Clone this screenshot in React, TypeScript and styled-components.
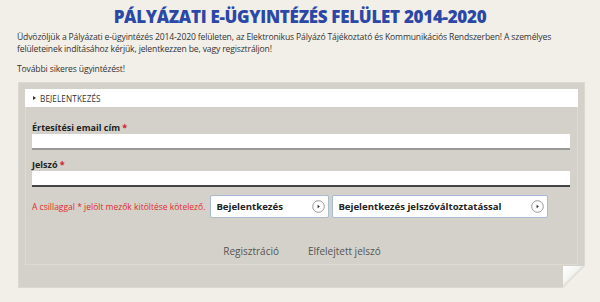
import React from "react";
import styled, { createGlobalStyle } from "styled-components";

const Global = createGlobalStyle`
  html, body { margin: 0; padding: 0; background: #f2efe9; }
  body { font-family: "Open Sans", "Noto Sans", sans-serif; color: #333; }
  * { box-sizing: border-box; }
`;

const Page = styled.div`
  width: 600px;
  height: 302px;
  overflow: hidden;
  padding: 4px 0 0 0;
`;

const Title = styled.h1`
  margin: 0;
  height: 26px;
  text-align: center;
  font-family: "Open Sans", sans-serif;
  font-weight: 800;
  font-size: 17px;
  line-height: 26px;
  color: #2b48a6;
  letter-spacing: -0.3px;
`;

const Intro = styled.p<{ $gap: number }>`
  margin: ${(p) => p.$gap}px 10px 0 17px;
  font-size: 8.6px;
  line-height: 12px;
  letter-spacing: -0.15px;
  color: #333;
`;

const Panel = styled.div`
  position: relative;
  margin: 7px 15px 0 18px;
  background: #d4d1ca;
  border: 1px solid #dcd9d3;
  padding: 6px 6px 22px 6px;
`;

const Header = styled.div`
  height: 18px;
  background: #fff;
  display: flex;
  align-items: center;
  gap: 4px;
  padding-left: 8px;
  font-size: 8.2px;
  color: #333;
  letter-spacing: 0.1px;
`;

const Arrow = styled.span`
  width: 0;
  height: 0;
  border-top: 2.5px solid transparent;
  border-bottom: 2.5px solid transparent;
  border-left: 3px solid #333;
`;

const FormBox = styled.div`
  border: 1px solid #dedbd5;
  border-top: none;
  padding: 15px 7px 6px 6px;
`;

const Label = styled.div`
  font-size: 9px;
  font-weight: 700;
  color: #222;
  line-height: 12px;
  height: 12px;
`;

const Star = styled.span`
  color: #d0202a;
`;

const Input = styled.div<{ $dark?: boolean }>`
  height: 16px;
  background: #fff;
  border-bottom: 2px solid ${(p) => (p.$dark ? "#444" : "#9a9a98")};
  margin: 0 0 9px 0;
`;

const Actions = styled.div`
  display: flex;
  align-items: center;
  margin-top: -1px;
  height: 23px;
`;

const Required = styled.span`
  font-size: 8.5px;
  color: #e02b2b;
  margin-right: 5px;
`;

const Button = styled.button<{ $w: number }>`
  width: ${(p) => p.$w}px;
  height: 23px;
  background: #fff;
  border: 1px solid #a8bbd2;
  border-radius: 2px;
  display: flex;
  align-items: center;
  justify-content: space-between;
  padding: 0 3px 0 5px;
  margin-right: 3px;
  font-family: "Open Sans", sans-serif;
  font-weight: 700;
  font-size: 9.6px;
  color: #222;
  cursor: pointer;
`;

const Links = styled.div`
  display: flex;
  justify-content: center;
  gap: 29px;
  margin-top: 26px;
  padding-left: 2px;
  line-height: 14px;
  font-size: 10px;
  color: #555;
`;

const Fold = styled.div`
  position: absolute;
  right: -1px;
  bottom: -1px;
  width: 22px;
  height: 22px;
  background: linear-gradient(
    to bottom right,
    #ffffff 0%,
    #f4f4f2 40%,
    #dcdbd6 49%,
    #f2efe9 51%,
    #f2efe9 100%
  );
`;

const GoIcon = () => (
  <svg width="13" height="13" viewBox="0 0 13 13">
    <circle cx="6.5" cy="6.5" r="5.8" fill="#fff" stroke="#8c8c8c" strokeWidth="0.9" />
    <path d="M5.6 4.8 L7.8 6.5 L5.6 8.2 Z" fill="#222" />
  </svg>
);

export default function App() {
  return (
    <Page>
      <Global />
      <Title>PÁLYÁZATI E-ÜGYINTÉZÉS FELÜLET 2014-2020</Title>
      <Intro $gap={1}>
        Üdvözöljük a Pályázati e-ügyintézés 2014-2020 felületen, az Elektronikus Pályázó Tájékoztató és
        Kommunikációs Rendszerben! A személyes felületeinek indításához kérjük, jelentkezzen be, vagy
        regisztráljon!
      </Intro>
      <Intro $gap={8}>További sikeres ügyintézést!</Intro>
      <Panel>
        <Header>
          <Arrow />
          BEJELENTKEZÉS
        </Header>
        <FormBox>
          <Label>
            Értesítési email cím <Star>*</Star>
          </Label>
          <Input />
          <Label>
            Jelszó <Star>*</Star>
          </Label>
          <Input $dark />
          <Actions>
            <Required>A csillaggal * jelölt mezők kitöltése kötelező.</Required>
            <Button $w={119}>
              Bejelentkezés
              <GoIcon />
            </Button>
            <Button $w={216}>
              Bejelentkezés jelszóváltoztatással
              <GoIcon />
            </Button>
          </Actions>
          <Links>
            <span>Regisztráció</span>
            <span>Elfelejtett jelszó</span>
          </Links>
        </FormBox>
        <Fold />
      </Panel>
    </Page>
  );
}
